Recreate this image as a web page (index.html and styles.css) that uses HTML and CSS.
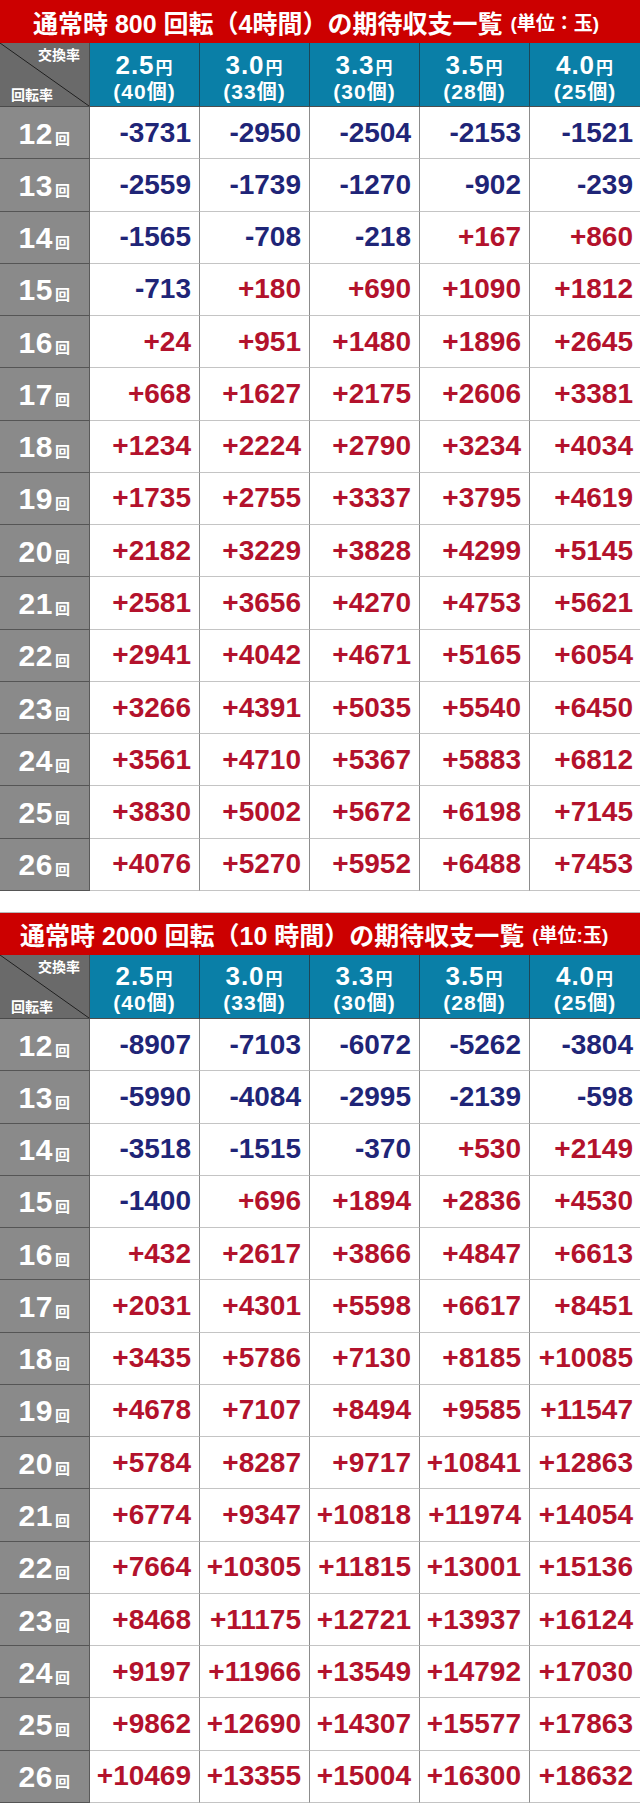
FILE: index.html
```html
<!DOCTYPE html>
<html lang="ja">
<head>
<meta charset="utf-8">
<title>期待収支一覧</title>
<link rel="stylesheet" href="styles.css">
</head>
<body>
<div class="page">
<section class="sec">
  <div class="title t1">通常時 800 回転（4時間）の期待収支一覧<span class="unit">(単位：玉)</span></div>
  <div class="grid">
    <div class="corner"><span class="c-top">交換率</span><span class="c-bot">回転率</span></div>
    <div class="hd"><span class="r">2.5<small>円</small></span><span class="c">(40<em>個</em>)</span></div>
    <div class="hd"><span class="r">3.0<small>円</small></span><span class="c">(33<em>個</em>)</span></div>
    <div class="hd"><span class="r">3.3<small>円</small></span><span class="c">(30<em>個</em>)</span></div>
    <div class="hd"><span class="r">3.5<small>円</small></span><span class="c">(28<em>個</em>)</span></div>
    <div class="hd last"><span class="r">4.0<small>円</small></span><span class="c">(25<em>個</em>)</span></div>

    <div class="rn"><span>12<small>回</small></span></div><div class="v neg">-3731</div><div class="v neg">-2950</div><div class="v neg">-2504</div><div class="v neg">-2153</div><div class="v neg last">-1521</div>
    <div class="rn"><span>13<small>回</small></span></div><div class="v neg">-2559</div><div class="v neg">-1739</div><div class="v neg">-1270</div><div class="v neg">-902</div><div class="v neg last">-239</div>
    <div class="rn"><span>14<small>回</small></span></div><div class="v neg">-1565</div><div class="v neg">-708</div><div class="v neg">-218</div><div class="v pos">+167</div><div class="v pos last">+860</div>
    <div class="rn"><span>15<small>回</small></span></div><div class="v neg">-713</div><div class="v pos">+180</div><div class="v pos">+690</div><div class="v pos">+1090</div><div class="v pos last">+1812</div>
    <div class="rn"><span>16<small>回</small></span></div><div class="v pos">+24</div><div class="v pos">+951</div><div class="v pos">+1480</div><div class="v pos">+1896</div><div class="v pos last">+2645</div>
    <div class="rn"><span>17<small>回</small></span></div><div class="v pos">+668</div><div class="v pos">+1627</div><div class="v pos">+2175</div><div class="v pos">+2606</div><div class="v pos last">+3381</div>
    <div class="rn"><span>18<small>回</small></span></div><div class="v pos">+1234</div><div class="v pos">+2224</div><div class="v pos">+2790</div><div class="v pos">+3234</div><div class="v pos last">+4034</div>
    <div class="rn"><span>19<small>回</small></span></div><div class="v pos">+1735</div><div class="v pos">+2755</div><div class="v pos">+3337</div><div class="v pos">+3795</div><div class="v pos last">+4619</div>
    <div class="rn"><span>20<small>回</small></span></div><div class="v pos">+2182</div><div class="v pos">+3229</div><div class="v pos">+3828</div><div class="v pos">+4299</div><div class="v pos last">+5145</div>
    <div class="rn"><span>21<small>回</small></span></div><div class="v pos">+2581</div><div class="v pos">+3656</div><div class="v pos">+4270</div><div class="v pos">+4753</div><div class="v pos last">+5621</div>
    <div class="rn"><span>22<small>回</small></span></div><div class="v pos">+2941</div><div class="v pos">+4042</div><div class="v pos">+4671</div><div class="v pos">+5165</div><div class="v pos last">+6054</div>
    <div class="rn"><span>23<small>回</small></span></div><div class="v pos">+3266</div><div class="v pos">+4391</div><div class="v pos">+5035</div><div class="v pos">+5540</div><div class="v pos last">+6450</div>
    <div class="rn"><span>24<small>回</small></span></div><div class="v pos">+3561</div><div class="v pos">+4710</div><div class="v pos">+5367</div><div class="v pos">+5883</div><div class="v pos last">+6812</div>
    <div class="rn"><span>25<small>回</small></span></div><div class="v pos">+3830</div><div class="v pos">+5002</div><div class="v pos">+5672</div><div class="v pos">+6198</div><div class="v pos last">+7145</div>
    <div class="rn"><span>26<small>回</small></span></div><div class="v pos">+4076</div><div class="v pos">+5270</div><div class="v pos">+5952</div><div class="v pos">+6488</div><div class="v pos last">+7453</div>
  </div>
</section>

<section class="sec sec2">
  <div class="title t2">通常時 2000 回転（10 時間）の期待収支一覧<span class="unit">(単位:玉)</span></div>
  <div class="grid">
    <div class="corner"><span class="c-top">交換率</span><span class="c-bot">回転率</span></div>
    <div class="hd"><span class="r">2.5<small>円</small></span><span class="c">(40<em>個</em>)</span></div>
    <div class="hd"><span class="r">3.0<small>円</small></span><span class="c">(33<em>個</em>)</span></div>
    <div class="hd"><span class="r">3.3<small>円</small></span><span class="c">(30<em>個</em>)</span></div>
    <div class="hd"><span class="r">3.5<small>円</small></span><span class="c">(28<em>個</em>)</span></div>
    <div class="hd last"><span class="r">4.0<small>円</small></span><span class="c">(25<em>個</em>)</span></div>

    <div class="rn"><span>12<small>回</small></span></div><div class="v neg">-8907</div><div class="v neg">-7103</div><div class="v neg">-6072</div><div class="v neg">-5262</div><div class="v neg last">-3804</div>
    <div class="rn"><span>13<small>回</small></span></div><div class="v neg">-5990</div><div class="v neg">-4084</div><div class="v neg">-2995</div><div class="v neg">-2139</div><div class="v neg last">-598</div>
    <div class="rn"><span>14<small>回</small></span></div><div class="v neg">-3518</div><div class="v neg">-1515</div><div class="v neg">-370</div><div class="v pos">+530</div><div class="v pos last">+2149</div>
    <div class="rn"><span>15<small>回</small></span></div><div class="v neg">-1400</div><div class="v pos">+696</div><div class="v pos">+1894</div><div class="v pos">+2836</div><div class="v pos last">+4530</div>
    <div class="rn"><span>16<small>回</small></span></div><div class="v pos">+432</div><div class="v pos">+2617</div><div class="v pos">+3866</div><div class="v pos">+4847</div><div class="v pos last">+6613</div>
    <div class="rn"><span>17<small>回</small></span></div><div class="v pos">+2031</div><div class="v pos">+4301</div><div class="v pos">+5598</div><div class="v pos">+6617</div><div class="v pos last">+8451</div>
    <div class="rn"><span>18<small>回</small></span></div><div class="v pos">+3435</div><div class="v pos">+5786</div><div class="v pos">+7130</div><div class="v pos">+8185</div><div class="v pos last">+10085</div>
    <div class="rn"><span>19<small>回</small></span></div><div class="v pos">+4678</div><div class="v pos">+7107</div><div class="v pos">+8494</div><div class="v pos">+9585</div><div class="v pos last">+11547</div>
    <div class="rn"><span>20<small>回</small></span></div><div class="v pos">+5784</div><div class="v pos">+8287</div><div class="v pos">+9717</div><div class="v pos">+10841</div><div class="v pos last">+12863</div>
    <div class="rn"><span>21<small>回</small></span></div><div class="v pos">+6774</div><div class="v pos">+9347</div><div class="v pos">+10818</div><div class="v pos">+11974</div><div class="v pos last">+14054</div>
    <div class="rn"><span>22<small>回</small></span></div><div class="v pos">+7664</div><div class="v pos">+10305</div><div class="v pos">+11815</div><div class="v pos">+13001</div><div class="v pos last">+15136</div>
    <div class="rn"><span>23<small>回</small></span></div><div class="v pos">+8468</div><div class="v pos">+11175</div><div class="v pos">+12721</div><div class="v pos">+13937</div><div class="v pos last">+16124</div>
    <div class="rn"><span>24<small>回</small></span></div><div class="v pos">+9197</div><div class="v pos">+11966</div><div class="v pos">+13549</div><div class="v pos">+14792</div><div class="v pos last">+17030</div>
    <div class="rn"><span>25<small>回</small></span></div><div class="v pos">+9862</div><div class="v pos">+12690</div><div class="v pos">+14307</div><div class="v pos">+15577</div><div class="v pos last">+17863</div>
    <div class="rn"><span>26<small>回</small></span></div><div class="v pos">+10469</div><div class="v pos">+13355</div><div class="v pos">+15004</div><div class="v pos">+16300</div><div class="v pos last">+18632</div>
  </div>
</section>
</div>
</body>
</html>
```

FILE: styles.css
```css
html, body {
  margin: 0;
  padding: 0;
  background: #ffffff;
}

body {
  font-family: "Liberation Sans", Arial, "Noto Sans CJK JP", sans-serif;
  font-weight: bold;
}

.page {
  width: 640px;
}

.sec2 {
  margin-top: 21px;
}

.title {
  height: 43px;
  box-sizing: border-box;
  background: #cc0000;
  color: #ffffff;
  font-size: 25px;
  display: flex;
  align-items: center;
  white-space: nowrap;
}

.t1 {
  padding-left: 33px;
}

.t2 {
  padding-left: 20px;
  border-top: 1px solid #b8b8b8;
}

.unit {
  font-size: 19px;
  margin-left: 8px;
}

.grid {
  display: grid;
  grid-template-columns: 90px repeat(5, 110px);
  grid-template-rows: 64px repeat(15, 52.27px);
}

.grid > div {
  box-sizing: border-box;
}

.corner {
  background: linear-gradient(to top right, #6a6a6a calc(50% - 0.8px), #1e1e1e 50%, #6a6a6a calc(50% + 0.8px));
  border-bottom: 1px solid #4a4a4a;
  border-right: 1px solid #4a4a4a;
  color: #ffffff;
  font-size: 14px;
  font-family: "Noto Sans CJK JP", sans-serif;
  display: flex;
  flex-direction: column;
  justify-content: space-between;
  padding: 4px 9px 5px 11px;
  line-height: 1;
}

.c-top {
  align-self: flex-end;
}

.c-bot {
  align-self: flex-start;
}

.hd {
  background: #0a7fa7;
  color: #ffffff;
  border-right: 1px solid #1d4657;
  border-bottom: 1px solid #4d4d4d;
  display: flex;
  flex-direction: column;
  align-items: center;
  justify-content: center;
  line-height: 1;
  padding-top: 4px;
}

.hd .r {
  font-size: 26px;
  letter-spacing: 1px;
}

.hd .r small {
  font-size: 17px;
  font-family: "Noto Sans CJK JP", sans-serif;
  margin-left: 1px;
}

.hd .c {
  font-size: 21px;
  margin-top: 3px;
  letter-spacing: 1px;
}

.hd .c em {
  font-style: normal;
  font-size: 20px;
  font-family: "Noto Sans CJK JP", sans-serif;
}

.hd.last {
  border-right: none;
}

.rn {
  background: #8a8a8a;
  color: #ffffff;
  border-bottom: 1px solid #555555;
  border-right: 1px solid #5a5a5a;
  display: flex;
  align-items: center;
  justify-content: center;
  font-size: 30px;
  letter-spacing: 0.5px;
  padding-top: 2px;
}

.rn small {
  font-size: 15px;
  font-family: "Noto Sans CJK JP", sans-serif;
  margin-left: 2px;
}

.v {
  border-right: 1px solid #8c8c8c;
  border-bottom: 1px solid #c4c4c4;
  display: flex;
  align-items: center;
  justify-content: flex-end;
  padding-right: 8px;
  font-size: 28px;
  background: #ffffff;
}

.v.last {
  border-right: none;
  padding-right: 7px;
}

.neg {
  color: #1f2577;
}

.pos {
  color: #b3122c;
}
```
